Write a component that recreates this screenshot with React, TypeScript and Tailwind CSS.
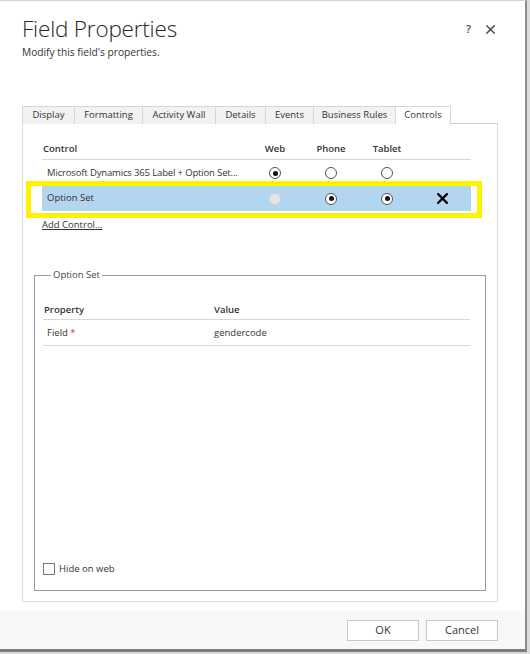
import clsx from "clsx";

const tabs = [
  { label: "Display", w: "w-[52px]" },
  { label: "Formatting", w: "w-[68px]" },
  { label: "Activity Wall", w: "w-[73px]" },
  { label: "Details", w: "w-[50px]" },
  { label: "Events", w: "w-[48px]" },
  { label: "Business Rules", w: "w-[82px]" },
  { label: "Controls", w: "w-[56px]", active: true },
];

function Radio({ checked, disabled }: { checked?: boolean; disabled?: boolean }) {
  return (
    <span
      className={clsx(
        "flex h-[12px] w-[12px] items-center justify-center rounded-full border",
        disabled ? "border-[#d4d4d4] bg-[#e6e6e6]" : "border-[#555] bg-white"
      )}
    >
      {checked && <span className="h-[5px] w-[5px] rounded-full bg-[#111]" />}
    </span>
  );
}

function Cross({ size, stroke, color }: { size: number; stroke: number; color: string }) {
  return (
    <svg width={size} height={size} viewBox="0 0 10 10">
      <path d="M1 1 L9 9 M9 1 L1 9" stroke={color} strokeWidth={stroke} strokeLinecap="square" fill="none" />
    </svg>
  );
}

export default function App() {
  return (
    <div className="h-[654px] w-[530px] overflow-hidden bg-[#dcdcdc] font-['Open_Sans',sans-serif] text-[#333]">
      <div className="flex h-[652px] w-[527px] flex-col border-t border-r-2 border-b-[3px] border-t-[#d4d4d4] border-r-[#8c8c8c] border-b-[#7c7c7c] bg-white">
        <header className="flex items-start justify-between pl-[22px] pr-[30px] pt-[13px]">
          <div>
            <h1 className="text-[22.5px] font-light leading-[30px] tracking-[-0.2px] text-[#262626]">Field Properties</h1>
            <p className="mt-[1px] text-[10.2px] leading-[14px] text-[#333]">Modify this field's properties.</p>
          </div>
          <div className="mt-[8px] flex items-center gap-[15px] text-[#444]">
            <span className="text-[11px] font-semibold leading-[14px]">?</span>
            <Cross size={9} stroke={1.6} color="#444" />
          </div>
        </header>

        <div className="ml-[22px] mt-[47px] flex w-[476px] flex-1 flex-col">
          <div className="flex h-[18px] items-stretch">
            {tabs.map((t) => (
              <div
                key={t.label}
                className={clsx(
                  "flex items-center justify-center border-l border-t border-[#d6d6d6] text-[9.5px] text-[#333]",
                  t.w,
                  t.active ? "border-r bg-white" : "bg-[#f2f2f2]"
                )}
              >
                {t.label}
              </div>
            ))}
            <div className="flex-1 border-b border-[#cfcfcf]" />
          </div>

          <div className="flex flex-1 flex-col border-x border-b border-[#dcdcdc] pb-[10px]">
            <div className="ml-[19px] mt-[16px] w-[429px] text-[9.5px]">
              <div className="grid h-[20px] grid-cols-[205px_56px_56px_56px_56px] items-center border-b border-[#d8d8d8] font-semibold text-[#333]">
                <span className="pl-[1px]">Control</span>
                <span className="text-center">Web</span>
                <span className="text-center">Phone</span>
                <span className="text-center">Tablet</span>
                <span />
              </div>
              <div className="grid h-[26px] grid-cols-[205px_56px_56px_56px_56px] items-center">
                <span className="whitespace-nowrap pl-[5px] tracking-[-0.15px]">Microsoft Dynamics 365 Label + Option Set...</span>
                <span className="flex justify-center"><Radio checked /></span>
                <span className="flex justify-center"><Radio /></span>
                <span className="flex justify-center"><Radio /></span>
                <span />
              </div>
              <div className="relative grid h-[25px] grid-cols-[205px_56px_56px_56px_56px] items-center bg-[#b2d5f0]">
                <span className="pl-[5px]">Option Set</span>
                <span className="flex justify-center"><Radio disabled /></span>
                <span className="flex justify-center"><Radio checked /></span>
                <span className="flex justify-center"><Radio checked /></span>
                <span className="flex justify-center pr-[2px]"><Cross size={11} stroke={2} color="#000" /></span>
                <div className="pointer-events-none absolute -bottom-[7px] -left-[16px] -right-[11px] -top-[5px] border-[5px] border-[#fff200]" />
              </div>
              <a className="mt-[7px] block leading-[14px] text-[#333] underline">Add Control...</a>
            </div>

            <fieldset className="mx-[11px] mt-[36px] flex flex-1 flex-col border border-[#9a9a9a] px-[8px] pb-[14px]">
              <legend className="ml-[8px] px-[2px] text-[9.5px] leading-[14px] text-[#444]">Option Set</legend>
              <div className="mt-[19px] w-[427px] text-[9.5px]">
                <div className="grid h-[19px] grid-cols-[171px_1fr] items-center border-b border-[#d8d8d8] font-semibold">
                  <span className="pl-[1px]">Property</span>
                  <span>Value</span>
                </div>
                <div className="grid h-[26px] grid-cols-[171px_1fr] items-center border-b border-[#d8d8d8] pt-[2px]">
                  <span className="pl-[4px]">
                    Field <span className="text-[#e33]">*</span>
                  </span>
                  <span>gendercode</span>
                </div>
              </div>
              <div className="flex-1" />
              <label className="flex items-center gap-[4px] text-[9.5px]">
                <span className="h-[12px] w-[12px] border border-[#777] bg-white" />
                Hide on web
              </label>
            </fieldset>
          </div>
        </div>

        <footer className="mt-[9px] flex h-[38px] items-center justify-end gap-[7px] bg-[#f8f8f8] pr-[27px]">
          <button className="h-[21px] w-[72px] border border-[#c8c8c8] bg-white text-[11px] text-[#333]">OK</button>
          <button className="h-[21px] w-[72px] border border-[#c8c8c8] bg-white text-[11px] text-[#333]">Cancel</button>
        </footer>
      </div>
    </div>
  );
}
